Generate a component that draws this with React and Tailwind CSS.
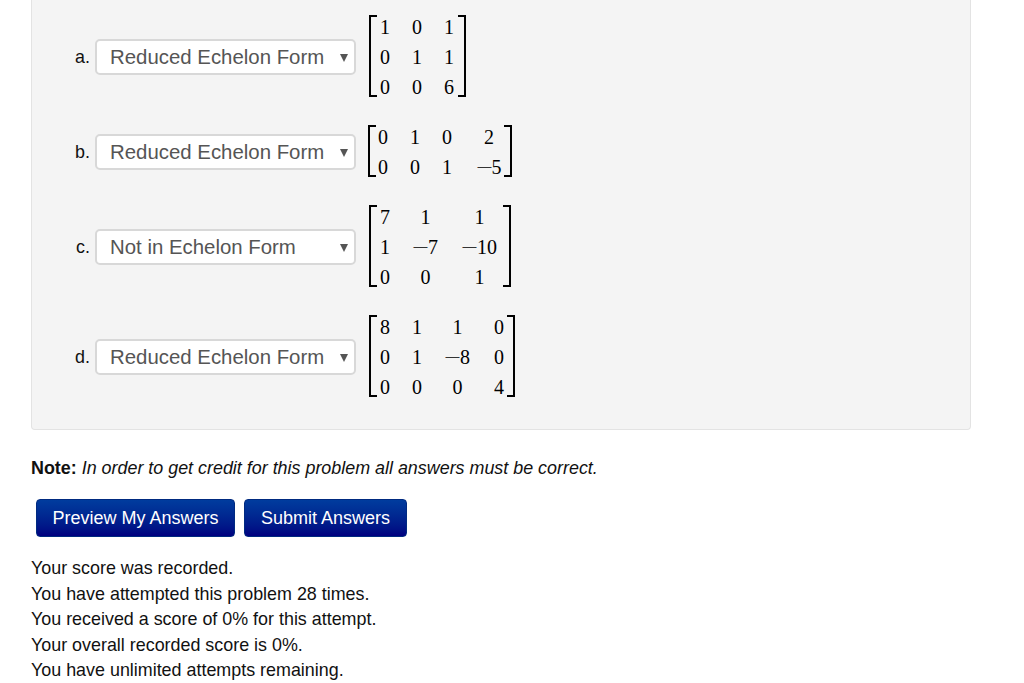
const serif = "font-['Liberation_Serif',serif]";

function Cell({ v }) {
  const neg = v.startsWith("-");
  return (
    <span className="whitespace-nowrap leading-none">
      {neg && <span className="inline-block w-[15px] text-center scale-x-150 text-[#333]">−</span>}
      {neg ? v.slice(1) : v}
    </span>
  );
}

function Matrix({ rows, cols, gap, pl, pr }) {
  return (
    <div className="relative flex">
      <div className="w-2 border-2 border-r-0 border-black" />
      <div
        className={`-mb-[5px] -mt-[3px] grid ${cols} ${gap} ${pl} ${pr} auto-rows-[30px] items-center justify-items-center ${serif} text-[20px] text-black`}
      >
        {rows.flat().map((v, i) => (
          <Cell key={i} v={v} />
        ))}
      </div>
      <div className="w-2 border-2 border-l-0 border-black" />
    </div>
  );
}

function Row({ label, value, children, mt, gapLeft = "ml-[13px]" }) {
  return (
    <div className={`flex items-center ${mt}`}>
      <span className="mt-[2px] w-[63px] pr-[5px] text-right text-[17.9px] text-[#111]">{label}</span>
      <div className="mt-[2px] flex h-9 w-[261px] items-center justify-between rounded-[5px] border-2 border-[#d8d8d8] bg-white pl-[13px] pr-[5px] text-[20.4px] text-[#555]">
        <span>{value}</span>
        <svg width="10" height="9" viewBox="0 0 10 9">
          <path d="M1 1h8L5 9z" fill="#555" />
        </svg>
      </div>
      <div className={gapLeft}>{children}</div>
    </div>
  );
}

export default function App() {
  return (
    <div className="h-[683px] w-[1024px] overflow-hidden bg-white font-['Liberation_Sans',Arial,sans-serif] text-[17.9px] text-[#111]">
      <div className="ml-[31px] flex h-[430px] w-[940px] flex-col rounded-b-[4px] border border-t-0 border-[#e3e3e3] bg-[#f4f4f4] pt-[15px]">
        <Row label="a." value="Reduced Echelon Form">
          <Matrix
            cols="grid-cols-[10px_10px_10px]"
            gap="gap-x-[22px]"
            pl="pl-[3px]"
            pr="pr-[4px]"
            rows={[["1", "0", "1"], ["0", "1", "1"], ["0", "0", "6"]]}
          />
        </Row>
        <Row label="b." value="Reduced Echelon Form" mt="mt-[28px]" gapLeft="ml-[12px]">
          <Matrix
            cols="grid-cols-[10px_10px_10px_30px]"
            gap="gap-x-[22px]"
            pl="pl-[2px]"
            pr="pr-[0px]"
            rows={[["0", "1", "0", "2"], ["0", "0", "1", "-5"]]}
          />
        </Row>
        <Row label="c." value="Not in Echelon Form" mt="mt-[28px]">
          <Matrix
            cols="grid-cols-[10px_25px_37px]"
            gap="gap-x-[23px]"
            pl="pl-[3px]"
            pr="pr-[5px]"
            rows={[["7", "1", "1"], ["1", "-7", "-10"], ["0", "0", "1"]]}
          />
        </Row>
        <Row label="d." value="Reduced Echelon Form" mt="mt-[28px]">
          <Matrix
            cols="grid-cols-[10px_10px_27px_12px]"
            gap="gap-x-[22px]"
            pl="pl-[3px]"
            pr="pr-[2px]"
            rows={[["8", "1", "1", "0"], ["0", "1", "-8", "0"], ["0", "0", "0", "4"]]}
          />
        </Row>
      </div>
      <p className="ml-[31px] mt-[28px] leading-[20px]">
        <b>Note:</b> <i>In order to get credit for this problem all answers must be correct.</i>
      </p>
      <div className="ml-[36px] mt-[21px] flex gap-[9px] text-[18px]">
        <button className="h-[38px] w-[199px] rounded-[4px] border border-[#002a80] bg-gradient-to-b from-[#003c9e] to-[#000080] text-white">
          Preview My Answers
        </button>
        <button className="h-[38px] w-[163px] rounded-[4px] border border-[#002a80] bg-gradient-to-b from-[#003c9e] to-[#000080] text-white">
          Submit Answers
        </button>
      </div>
      <div className="ml-[31px] mt-[19px] leading-[25.5px]">
        <div>Your score was recorded.</div>
        <div>You have attempted this problem 28 times.</div>
        <div>You received a score of 0% for this attempt.</div>
        <div>Your overall recorded score is 0%.</div>
        <div>You have unlimited attempts remaining.</div>
      </div>
    </div>
  );
}
